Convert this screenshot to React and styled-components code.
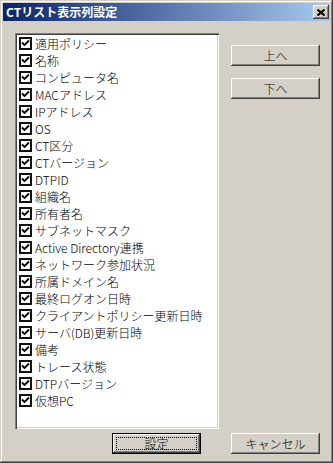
import React from "react";
import styled, { createGlobalStyle } from "styled-components";

const Global = createGlobalStyle`
  html, body { margin: 0; padding: 0; background: #d4d0c8; }
  body { font-family: "Noto Sans CJK JP", "Noto Sans", sans-serif; }
`;

const Window = styled.div`
  width: 333px;
  height: 463px;
  box-sizing: border-box;
  padding: 3px;
  background: #d4d0c8;
  box-shadow: inset -1px -1px #404040, inset 1px 1px #d4d0c8,
    inset -2px -2px #808080, inset 2px 2px #ffffff;
  display: flex;
  flex-direction: column;
`;

const Caption = styled.div`
  height: 18px;
  display: flex;
  align-items: center;
  padding-left: 3px;
  background: linear-gradient(to right, #0a246a, #a6caf0);
  color: #fff;
  font-weight: bold;
  font-size: 12px;
`;

const CaptionText = styled.span`
  flex: 1;
  line-height: 18px;
`;

const CloseBox = styled.div`
  width: 16px;
  height: 14px;
  margin-right: 1px;
  box-sizing: border-box;
  background: #d4d0c8;
  box-shadow: inset -1px -1px #404040, inset 1px 1px #ffffff,
    inset -2px -2px #808080;
  display: flex;
  align-items: center;
  justify-content: center;
`;

const Content = styled.div`
  padding: 12px 10px 0 12px;
  display: flex;
  flex-direction: column;
`;

const Main = styled.div`
  display: flex;
  gap: 12px;
`;

const ListBox = styled.div`
  width: 204px;
  height: 396px;
  box-sizing: border-box;
  padding: 2px 2px 2px 4px;
  background: #fff;
  box-shadow: inset 1px 1px #808080, inset 2px 2px #404040,
    inset -1px -1px #ffffff, inset -2px -2px #d4d0c8;
`;

const Row = styled.div`
  height: 17px;
  display: flex;
  align-items: center;
  gap: 3px;
  font-size: 12px;
  font-weight: 300;
  color: #000;
  white-space: nowrap;
`;

const Box = styled.span`
  width: 13px;
  height: 13px;
  box-sizing: border-box;
  border: 2px solid #111;
  background: #fff;
  display: flex;
  align-items: center;
  justify-content: center;
  flex: none;
`;

const Side = styled.div`
  padding-top: 12px;
  display: flex;
  flex-direction: column;
  gap: 12px;
`;

const Button = styled.button`
  width: 89px;
  height: 21px;
  padding: 0;
  border: ${(p) => (p.$default ? "1px solid #000" : "none")};
  box-sizing: border-box;
  background: #d4d0c8;
  font-family: "Noto Sans CJK JP", "Noto Sans", sans-serif;
  font-size: 12px;
  font-weight: 300;
  color: #000;
  position: relative;
  box-shadow: inset -1px -1px #404040, inset 1px 1px #ffffff,
    inset -2px -2px #808080;
  display: flex;
  align-items: center;
  justify-content: center;
`;

const Focus = styled.span`
  position: absolute;
  inset: 3px;
  border: 1px dotted #000;
`;

const Footer = styled.div`
  margin-top: 4px;
  display: flex;
  justify-content: flex-end;
  gap: 30px;
`;

const items = [
  "適用ポリシー",
  "名称",
  "コンピュータ名",
  "MACアドレス",
  "IPアドレス",
  "OS",
  "CT区分",
  "CTバージョン",
  "DTPID",
  "組織名",
  "所有者名",
  "サブネットマスク",
  "Active Directory連携",
  "ネットワーク参加状況",
  "所属ドメイン名",
  "最終ログオン日時",
  "クライアントポリシー更新日時",
  "サーバ(DB)更新日時",
  "備考",
  "トレース状態",
  "DTPバージョン",
  "仮想PC",
];

function Check() {
  return (
    <svg width="9" height="9" viewBox="0 0 9 9">
      <path d="M1 3.5 L3.5 6 L8 1.5" fill="none" stroke="#000" strokeWidth="1.8" />
    </svg>
  );
}

export default function App() {
  return (
    <>
      <Global />
      <Window>
        <Caption>
          <CaptionText>CTリスト表示列設定</CaptionText>
          <CloseBox>
            <svg width="8" height="7" viewBox="0 0 8 7">
              <path d="M0.5 0.5 L7.5 6.5 M7.5 0.5 L0.5 6.5" stroke="#000" strokeWidth="2" />
            </svg>
          </CloseBox>
        </Caption>
        <Content>
          <Main>
            <ListBox>
              {items.map((t) => (
                <Row key={t}>
                  <Box>
                    <Check />
                  </Box>
                  {t}
                </Row>
              ))}
            </ListBox>
            <Side>
              <Button>上へ</Button>
              <Button>下へ</Button>
            </Side>
          </Main>
          <Footer>
            <Button $default>
              <Focus />
              設定
            </Button>
            <Button>キャンセル</Button>
          </Footer>
        </Content>
      </Window>
    </>
  );
}
